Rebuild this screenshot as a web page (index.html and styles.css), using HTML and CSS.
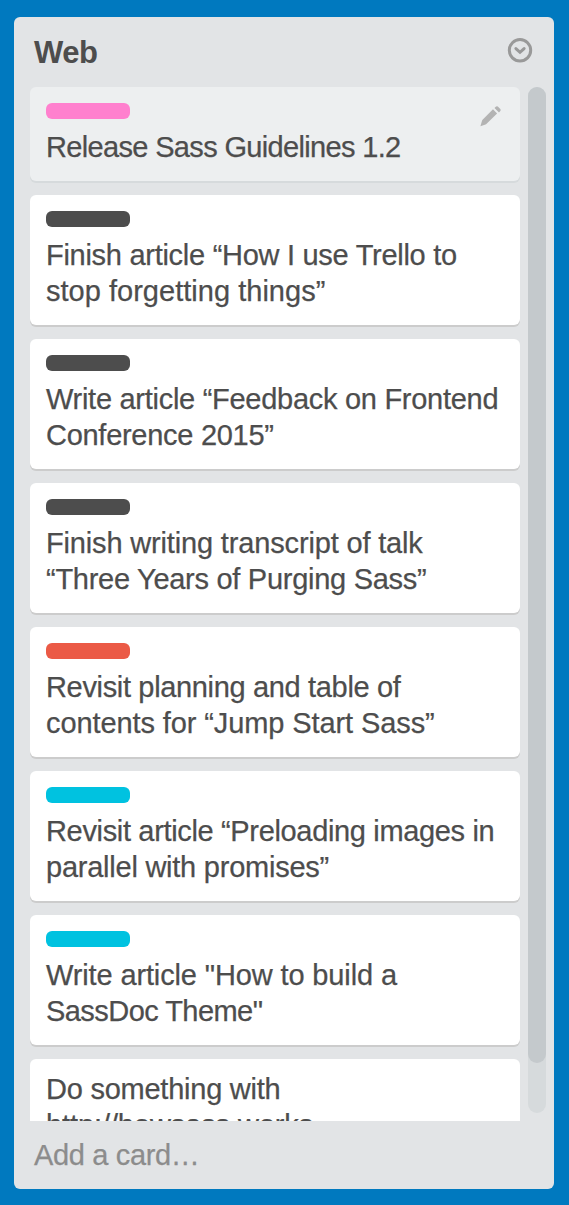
FILE: index.html
```html
<!DOCTYPE html>
<html lang="en">
<head>
<meta charset="utf-8">
<title>Web</title>
<link rel="stylesheet" href="styles.css">
</head>
<body>
<section class="list">
  <header class="list-header">
    <h2>Web</h2>
    <svg class="menu" width="26" height="26" viewBox="0 0 26 26"><circle cx="13" cy="13.300" r="10.700"/><path d="M8.900 11.600l4.100 3.700 4.100-3.700" stroke-linecap="round"/></svg>
  </header>
  <div class="list-body">
    <div class="cards">
      <article class="card active"><i class="label pink"></i><p><span class="ls-66">Release Sass Guidelines 1.2</span></p>
        <svg class="pencil" width="22" height="22" viewBox="0 0 22 22"><path d="M.4 21.300L2.100 15.600Q2.300 15 2.800 14.500L13 4.300l4.100 4.100L6.600 18.700Q6.100 19.200 5.500 19.500zM14.500 3l1.300-1.300q1-.9 2-.1l2.500 2.500q.9 1 0 2l-1.300 1.300z"/></svg></article>
      <article class="card"><i class="label black"></i><p><span class="ls-28">Finish article “How I use Trello to</span><br><span class="ls-0">stop forgetting things”</span></p></article>
      <article class="card"><i class="label black"></i><p><span class="ls-28">Write article “Feedback on Frontend</span><br><span class="ls-28">Conference 2015”</span></p></article>
      <article class="card"><i class="label black"></i><p><span class="ls-16">Finish writing transcript of talk</span><br><span class="ls-28">“Three Years of Purging Sass”</span></p></article>
      <article class="card"><i class="label red"></i><p><span class="ls-34">Revisit planning and table of</span><br><span class="ls-10">contents for “Jump Start Sass”</span></p></article>
      <article class="card"><i class="label sky"></i><p><span class="ls-34">Revisit article “Preloading images in</span><br><span class="ls-24">parallel with promises”</span></p></article>
      <article class="card"><i class="label sky"></i><p><span class="ls-12">Write article "How to build a</span><br><span class="ls-55">SassDoc Theme"</span></p></article>
      <article class="card"><p><span class="ls-24">Do something with</span><br><span class="ls-10">http://howsass.works</span></p></article>
    </div>
    <div class="track"><div class="thumb"></div></div>
  </div>
  <footer class="add"><span class="ls-34">Add a card…</span></footer>
</section>
</body>
</html>
```
FILE: styles.css
```css
* { box-sizing: border-box; }
body { margin: 0; padding: 17px 15px 16px 14px; height: 1205px; background: #0079bf; font-family: "Liberation Sans", Arial, sans-serif; color: #4d4d4d; overflow: hidden; }
.list { height: 1172px; background: #e2e4e6; border-radius: 6px; }
.list-header { height: 70px; padding: 20px 21px 0 20px; display: flex; justify-content: space-between; }
h2 { margin: 0; font-size: 31px; line-height: 32px; letter-spacing: -.5px; }
.menu { fill: none; stroke: #999; stroke-width: 3; }
.list-body { display: flex; height: 1034px; padding: 0 8px 0 16px; gap: 8px; }
.cards { width: 490px; overflow: hidden; }
.card { position: relative; height: 130px; margin-bottom: 14px; padding: 16px; background: #fff; border-radius: 6px; box-shadow: 0 2px 0 #ccc; }
.card.active { height: 94px; background: #edeff0; box-shadow: 0 2px 0 #d6dadc; }
.card:last-child { padding-top: 12px; }
.label { display: block; width: 84px; height: 16px; border-radius: 6px; margin-bottom: 10px; }
.pink { background: #ff80ce; }
.black { background: #4d4d4d; }
.red { background: #eb5a46; }
.sky { background: #00c2e0; }
p { margin: 0; font-size: 29px; line-height: 36px; white-space: nowrap; -webkit-text-stroke: .25px; }
.ls-0 { letter-spacing: .02px; }
.ls-10 { letter-spacing: -.1px; }
.ls-12 { letter-spacing: -.13px; }
.ls-16 { letter-spacing: -.16px; }
.ls-24 { letter-spacing: -.24px; }
.ls-28 { letter-spacing: -.28px; }
.ls-34 { letter-spacing: -.34px; }
.ls-55 { letter-spacing: -.55px; }
.ls-66 { letter-spacing: -.66px; }
.pencil { position: absolute; right: 18px; top: 18px; fill: #b3b3b3; }
.track { width: 18px; height: 1026px; border-radius: 9px; background: #d6dadc; }
.thumb { height: 976px; border-radius: 9px; background: #c4c9cc; }
.add { padding: 16px 20px; font-size: 29px; line-height: 36px; color: #8c8c8c; -webkit-text-stroke: .25px; }
```
